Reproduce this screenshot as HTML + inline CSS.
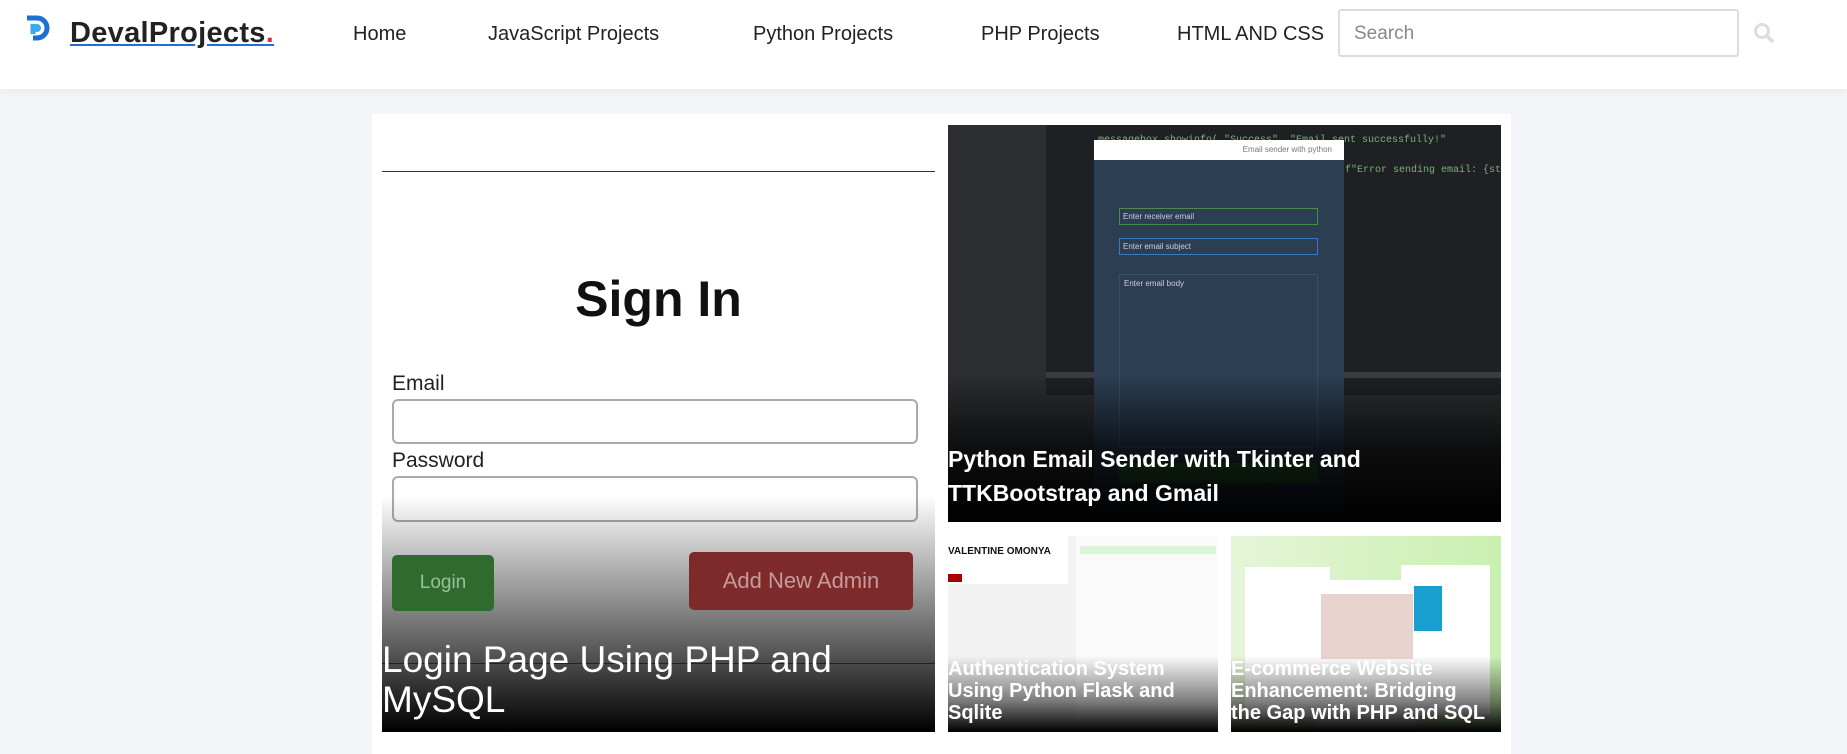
<!DOCTYPE html>
<html><head><meta charset="utf-8"><style>
*{box-sizing:border-box;margin:0;padding:0}
body{width:1847px;height:749px;overflow:hidden;background:#f4f5f8;font-family:"Liberation Sans",sans-serif;position:relative}
.hdr{position:absolute;left:0;top:0;width:1847px;height:89px;background:#fff;box-shadow:0 2px 8px rgba(0,0,0,.05)}
.abs{position:absolute}
.nav{position:absolute;top:23px;font-size:20px;color:#222}
.wrap{position:absolute;left:372px;top:114px;width:1139px;height:640px;background:#fff}
.card{position:absolute;overflow:hidden}
.t{position:absolute;color:#fff;font-weight:bold}
</style></head><body>
<div class="hdr">
 <svg class="abs" style="left:24px;top:15px" width="26" height="28" viewBox="0 0 26 28"><path d="M3 3h10a10 10 0 0 1 0 20h-4" stroke="#1d6fd1" stroke-width="5" fill="none"/><path d="M9 9v10" stroke="#38a9f0" stroke-width="5"/><circle cx="13" cy="13" r="4" fill="#38a9f0"/></svg>
 <div class="abs" style="left:70px;top:17px;font-size:29px;font-weight:bold;color:#222;text-decoration:underline;text-decoration-color:#1d6fd1;letter-spacing:0.3px">DevalProjects<span style="color:#e03030">.</span></div>
 <div class="nav" style="left:353px">Home</div>
 <div class="nav" style="left:488px">JavaScript Projects</div>
 <div class="nav" style="left:753px">Python Projects</div>
 <div class="nav" style="left:981px">PHP Projects</div>
 <div class="nav" style="left:1177px">HTML AND CSS</div>
 <div class="abs" style="left:1338px;top:9px;width:401px;height:48px;border:2px solid #ddd;border-radius:3px;padding:12px 14px;font-size:19px;color:#888">Search</div>
 <svg class="abs" style="left:1753px;top:22px" width="22" height="22" viewBox="0 0 22 22"><circle cx="9" cy="9" r="6.5" stroke="#ddd" stroke-width="3" fill="none"/><path d="M14 14l6 6" stroke="#ddd" stroke-width="3.5"/></svg>
</div>
<div class="wrap"></div>
<div class="card" style="left:382px;top:125px;width:553px;height:607px;background:#fff">
 <div class="abs" style="left:0;top:46px;width:553px;height:1px;background:#333"></div>
 <div class="abs" style="left:0;top:145px;width:553px;text-align:center;font-size:50px;font-weight:bold;color:#111">Sign In</div>
 <div class="abs" style="left:10px;top:247px;font-size:21px;color:#222">Email</div>
 <div class="abs" style="left:10px;top:274px;width:526px;height:45px;border:2px solid #aaa;border-radius:6px;background:#fff"></div>
 <div class="abs" style="left:10px;top:324px;font-size:21px;color:#222">Password</div>
 <div class="abs" style="left:10px;top:351px;width:526px;height:46px;border:2px solid #aaa;border-radius:6px;background:#fff"></div>
 <div class="abs" style="left:0;top:370px;width:553px;height:237px;background:linear-gradient(rgba(0,0,0,0),rgba(0,0,0,.55) 55%,#000)"></div>
 <div class="abs" style="left:10px;top:430px;width:102px;height:56px;background:#2f6a2f;border-radius:5px;color:#9cbf9c;font-size:19px;text-align:center;line-height:56px">Login</div>
 <div class="abs" style="left:307px;top:427px;width:224px;height:58px;background:#7f2a2a;border-radius:5px;color:#c59a9a;font-size:22px;text-align:center;line-height:58px">Add New Admin</div>
 <div class="abs" style="left:0;top:538px;width:553px;height:1px;background:#222"></div>
 <div class="t" style="left:0;top:515px;font-size:37px;font-weight:normal;line-height:40px">Login Page Using PHP and<br>MySQL</div>
</div>
<div class="card" style="left:948px;top:125px;width:553px;height:397px;background:#2b2d30">
 <div class="abs" style="left:98px;top:0;width:455px;height:270px;background:#1f2023"></div>
 <div class="abs" style="left:98px;top:247px;width:455px;height:6px;background:#3a3c40"></div>
 <div class="abs" style="left:150px;top:10px;font:10px 'Liberation Mono',monospace;color:#7ab07a;white-space:pre">messagebox.showinfo( "Success"  "Email sent successfully!"</div>
 <div class="abs" style="left:397px;top:40px;font:10px 'Liberation Mono',monospace;color:#7ab07a;white-space:pre">f"Error sending email: {str(e)}"</div>
 <div class="abs" style="left:146px;top:15px;width:250px;height:20px;background:#fff;font-size:8px;color:#777;text-align:right;padding:5px 12px">Email sender with python</div>
 <div class="abs" style="left:146px;top:35px;width:250px;height:362px;background:#2c3e52"></div>
 <div class="abs" style="left:171px;top:83px;width:199px;height:17px;border:1px solid #4a8a4a;font-size:8px;color:#ccd;padding:3px">Enter receiver email</div>
 <div class="abs" style="left:171px;top:113px;width:199px;height:17px;border:1px solid #3b78c8;font-size:8px;color:#ccd;padding:3px">Enter email subject</div>
 <div class="abs" style="left:171px;top:149px;width:199px;height:174px;border:1px solid #3c4e62;font-size:8px;color:#ccd;padding:4px">Enter email body</div>
 <div class="abs" style="left:171px;top:338px;width:199px;height:20px;background:#2e6a36"></div>
 <div class="abs" style="left:0;top:250px;width:553px;height:147px;background:linear-gradient(rgba(0,0,0,0),rgba(0,0,0,.7) 50%,#000)"></div>
 <div class="t" style="left:0;top:317px;font-size:23px;line-height:34px">Python Email Sender with Tkinter and<br>TTKBootstrap and Gmail</div>
</div>
<div class="card" style="left:948px;top:536px;width:270px;height:196px;background:#f2f2f2">
 <div class="abs" style="left:0;top:0;width:120px;height:48px;background:#fff"></div>
 <div class="abs" style="left:0;top:10px;font-size:10px;font-weight:bold;color:#111">VALENTINE OMONYA</div>
 <div class="abs" style="left:0;top:38px;width:14px;height:8px;background:#a00"></div>
 <div class="abs" style="left:128px;top:0;width:142px;height:196px;background:#fafafa"></div>
 <div class="abs" style="left:132px;top:10px;width:136px;height:8px;background:#d8f5d8"></div>
 <div class="abs" style="left:0;top:120px;width:270px;height:76px;background:linear-gradient(rgba(0,0,0,0),rgba(0,0,0,.5) 60%,#000)"></div>
 <div class="t" style="left:0;top:122px;font-size:20px;line-height:22px">Authentication System<br>Using Python Flask and<br>Sqlite</div>
</div>
<div class="card" style="left:1231px;top:536px;width:270px;height:196px;background:linear-gradient(90deg,#e6f5d8,#c8f0b0)">
 <div class="abs" style="left:14px;top:31px;width:85px;height:150px;background:#fff"></div>
 <div class="abs" style="left:170px;top:29px;width:89px;height:150px;background:#fff"></div>
 <div class="abs" style="left:86px;top:44px;width:99px;height:150px;background:#fff"></div>
 <div class="abs" style="left:90px;top:58px;width:92px;height:65px;background:#e8d3cf"></div>
 <div class="abs" style="left:183px;top:50px;width:28px;height:45px;background:#1aa0d0"></div>
 <div class="abs" style="left:0;top:120px;width:270px;height:76px;background:linear-gradient(rgba(0,0,0,0),rgba(0,0,0,.5) 60%,#000)"></div>
 <div class="t" style="left:0;top:122px;font-size:20px;line-height:22px">E-commerce Website<br>Enhancement: Bridging<br>the Gap with PHP and SQL</div>
</div>
</body></html>
